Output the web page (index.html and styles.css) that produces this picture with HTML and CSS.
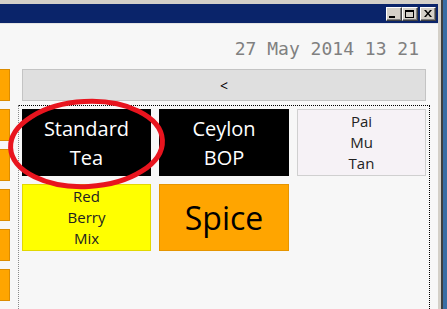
FILE: index.html
```html
<!DOCTYPE html>
<html lang="en">
<head>
    <meta charset="UTF-8">
    <meta name="viewport" content="width=device-width, initial-scale=1.0">
    <title>Tea Timer</title>
    <link rel="stylesheet" href="styles.css">
</head>
<body>
    <div class="window">
        <div class="titlebar">
            <button class="cap-btn"><span class="glyph-min"></span></button>
            <button class="cap-btn"><span class="glyph-max"></span></button>
            <button class="cap-btn cap-close">
                <svg width="8" height="7" viewBox="0 0 8 7">
                    <path d="M0 0h2l2 2.5L6 0h2L5 3.5 8 7H6L4 4.5 2 7H0l3-3.5z" fill="#000"/>
                </svg>
            </button>
        </div>

        <div class="client">
            <div class="clock">27 May 2014 13 21</div>

            <div class="workspace">
                <div class="tabs">
                    <div class="tab"></div>
                    <div class="tab"></div>
                    <div class="tab"></div>
                    <div class="tab"></div>
                    <div class="tab"></div>
                    <div class="tab"></div>
                </div>

                <div class="main">
                    <button class="back-btn">&lt;</button>
                    <div class="tile-grid">
                        <div class="tile tile-dark">Standard<br>Tea</div>
                        <div class="tile tile-dark">Ceylon<br>BOP</div>
                        <div class="tile tile-small tile-pale">Pai<br>Mu<br>Tan</div>
                        <div class="tile tile-small tile-yellow">Red<br>Berry<br>Mix</div>
                        <div class="tile tile-orange">Spice</div>
                    </div>
                </div>
            </div>
        </div>

        <!-- red annotation ring drawn over the first tile -->
        <svg class="highlight" width="175" height="100" viewBox="0 0 175 100">
            <ellipse cx="86.5" cy="50" rx="76" ry="42.5" transform="rotate(-3 86.5 50)"
                     fill="none" stroke="#e8141e" stroke-width="5"/>
        </svg>
    </div>
</body>
</html>
```

FILE: styles.css
```css
* {
    margin: 0;
    padding: 0;
    box-sizing: border-box;
}

body {
    background-color: #3a6ea5;
    height: 309px;
    overflow: hidden;
    font-family: 'Open Sans', 'Noto Sans', sans-serif;
}

.window {
    position: relative;
    width: 441px;
    height: 309px;
    background-color: #f7f7f7;
    border-top: 4px solid #d4d0c8;
    border-right: 3px solid #d4d0c8;
    box-shadow: 2px 0 0 #404040;
    overflow: hidden;
}

.titlebar {
    height: 19px;
    background-color: #0a246a;
    display: flex;
    justify-content: flex-end;
    align-items: center;
    padding-right: 2px;
}

.cap-btn {
    width: 16px;
    height: 14px;
    background-color: #d4d0c8;
    border: 1px solid;
    border-color: #ffffff #404040 #404040 #ffffff;
    box-shadow: inset -1px -1px 0 #808080;
    display: flex;
    align-items: center;
    justify-content: center;
}

.cap-close {
    margin-left: 2px;
}

.glyph-min {
    width: 6px;
    height: 2px;
    background-color: #000;
    margin: 6px 4px 0 0;
}

.glyph-max {
    width: 9px;
    height: 8px;
    border: 1px solid #000;
    border-top-width: 2px;
    margin-right: 1px;
}

.client {
    border-top: 1px solid #e4e4e4;
}

.clock {
    font-family: 'DejaVu Sans Mono', monospace;
    font-size: 18px;
    line-height: 22px;
    color: #808080;
    text-align: right;
    padding: 14px 19px 0 0;
}

.workspace {
    display: flex;
    gap: 8px;
    margin-top: 9px;
    padding-right: 8px;
}

.tabs {
    width: 10px;
    display: flex;
    flex-direction: column;
    gap: 8px;
}

.tab {
    height: 32px;
    background-color: #ffa500;
    border: 1px solid #dc8c00;
    border-left: none;
}

.main {
    flex: 1;
}

.back-btn {
    display: block;
    width: 404px;
    height: 32px;
    margin: 0 4px;
    background-color: #dfdfdf;
    border: 1px solid #c4c4c4;
    font-family: 'Open Sans', sans-serif;
    font-size: 14px;
    color: #000;
}

.tile-grid {
    margin-top: 4px;
    border: 1px dotted #000;
    border-left-color: #8a8a8a;
    padding: 3px;
    display: grid;
    grid-template-columns: 129px 130px 129px;
    grid-auto-rows: 67px;
    gap: 8px;
    height: 240px;
}

.tile {
    display: flex;
    align-items: center;
    justify-content: center;
    text-align: center;
}

.tile-dark {
    background-color: #000;
    color: #fff;
    font-size: 20px;
    line-height: 29px;
}

.tile-small {
    font-size: 15px;
    line-height: 21px;
    color: #222;
}

.tile-pale {
    background-color: #f6f2f6;
    border: 1px solid #d0d0d0;
}

.tile-yellow {
    background-color: #ffff00;
    border: 1px solid #e2d800;
}

.tile-orange {
    background-color: #ffa500;
    border: 1px solid #e69500;
    font-size: 32px;
    color: #000;
}

.highlight {
    position: absolute;
    left: 0;
    top: 90px;
}
```
